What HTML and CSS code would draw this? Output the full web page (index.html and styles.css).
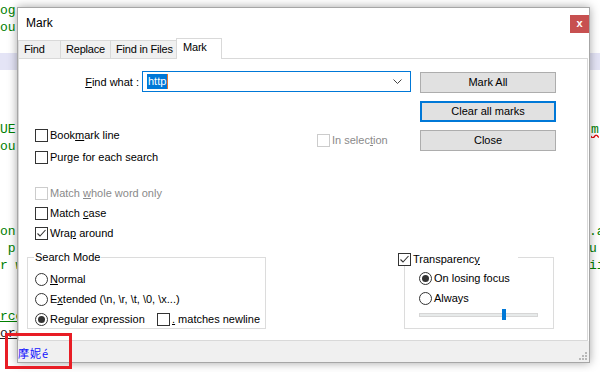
FILE: index.html
```html
<!DOCTYPE html>
<html>
<head>
    <meta charset="UTF-8">
    <title>Mark</title>
    <link rel="stylesheet" href="styles.css">
</head>
<body>
    <div class="screen">
        <!-- Редактор на заднем плане -->
        <div class="editor">
            <div class="line"><span>og:</span></div>
            <div class="line"><span>ou</span></div>
            <div class="line"></div>
            <div class="line current"></div>
            <div class="line"></div>
            <div class="line"></div>
            <div class="line"></div>
            <div class="line"><span>UE</span><span class="right"><span class="squiggle">m</span></span></div>
            <div class="line"><span>ou</span></div>
            <div class="line"></div>
            <div class="line"></div>
            <div class="line"></div>
            <div class="line"></div>
            <div class="line"><span>on</span><span class="right">.a</span></div>
            <div class="line"><span>&nbsp;p</span><span class="right">u</span></div>
            <div class="line"><span>r w</span><span class="right">ii</span></div>
            <div class="line"></div>
            <div class="line"></div>
            <div class="line"><span class="link">rce</span></div>
            <div class="line"><span class="link dark">ord</span></div>
            <div class="line"></div>
        </div>

        <!-- Окно Mark -->
        <div class="dialog">
            <div class="titlebar">
                <span class="title">Mark</span>
                <span class="close">x</span>
            </div>

            <div class="tabs">
                <div class="tab tab-find">Find</div>
                <div class="tab tab-replace">Replace</div>
                <div class="tab tab-files">Find in Files</div>
                <div class="tab tab-mark active">Mark</div>
            </div>

            <div class="panel">
                <div class="upper">
                    <div class="left">
                        <div class="find-row">
                            <span class="find-label"><u>F</u>ind what :</span>
                            <div class="combo">
                                <span class="selected">http</span><span class="caret"></span>
                                <svg class="chevron" width="9" height="5" viewBox="0 0 9 5"><path d="M0.5 0.5 L4.5 4.5 L8.5 0.5" fill="none" stroke="#444" stroke-width="1"/></svg>
                            </div>
                        </div>

                        <div class="opts">
                            <div class="opts-col">
                                <div class="check"><span class="box"></span><span>Book<u>m</u>ark line</span></div>
                                <div class="check"><span class="box"></span><span>Purge for each search</span></div>
                            </div>
                            <div class="check disabled in-selection"><span class="box"></span><span>In selec<u>t</u>ion</span></div>
                        </div>

                        <div class="opts2">
                            <div class="check disabled"><span class="box"></span><span>Match <u>w</u>hole word only</span></div>
                            <div class="check"><span class="box"></span><span>Match <u>c</u>ase</span></div>
                            <div class="check"><span class="box"><svg width="11" height="11" viewBox="0 0 11 11"><path d="M1.5 5.5 L4 8 L9.5 2" fill="none" stroke="#333" stroke-width="1.1"/></svg></span><span>Wra<u>p</u> around</span></div>
                        </div>
                    </div>

                    <div class="buttons">
                        <div class="btn">Mark All</div>
                        <div class="btn default">Clear all marks</div>
                        <div class="btn">Close</div>
                    </div>
                </div>

                <div class="lower">
                    <div class="group search-mode">
                        <span class="group-title">Search Mode</span>
                        <div class="check"><span class="radio"></span><span><u>N</u>ormal</span></div>
                        <div class="check"><span class="radio"></span><span>E<u>x</u>tended (\n, \r, \t, \0, \x...)</span></div>
                        <div class="check regex-row">
                            <span class="regex"><span class="radio on"></span><span>Regular expression</span></span>
                            <span class="box"></span><span><u>.</u> matches newline</span>
                        </div>
                    </div>

                    <div class="group transparency">
                        <div class="group-title check"><span class="box"><svg width="11" height="11" viewBox="0 0 11 11"><path d="M1.5 5.5 L4 8 L9.5 2" fill="none" stroke="#333" stroke-width="1.1"/></svg></span><span>Transparenc<u>y</u></span></div>
                        <div class="check"><span class="radio on"></span><span>On losing focus</span></div>
                        <div class="check"><span class="radio"></span><span>Always</span></div>
                        <div class="slider">
                            <div class="track"></div>
                            <div class="thumb"></div>
                        </div>
                    </div>
                </div>
            </div>

            <div class="status">
                <span class="status-text">摩妮é</span>
                <svg class="grip" width="8" height="8" viewBox="0 0 8 8">
                    <rect x="6" y="0" width="2" height="2" fill="#b8b8b8"/>
                    <rect x="3" y="3" width="2" height="2" fill="#b8b8b8"/>
                    <rect x="6" y="3" width="2" height="2" fill="#b8b8b8"/>
                    <rect x="0" y="6" width="2" height="2" fill="#b8b8b8"/>
                    <rect x="3" y="6" width="2" height="2" fill="#b8b8b8"/>
                    <rect x="6" y="6" width="2" height="2" fill="#b8b8b8"/>
                </svg>
            </div>
        </div>

        <!-- Красная рамка выделения -->
        <div class="marker"></div>
    </div>
</body>
</html>
```

FILE: styles.css
```css
body {
    margin: 0;
    font-family: "Liberation Sans", Arial, sans-serif;
    font-size: 11px;
    color: #000;
    background: #fff;
}

.screen {
    position: relative;
    width: 600px;
    height: 372px;
    overflow: hidden;
    background: #fff;
}

/* Редактор */
.editor {
    padding-top: 2px;
    font-family: "Liberation Mono", monospace;
    font-size: 13px;
    color: #008000;
}

.line {
    display: flex;
    justify-content: space-between;
    height: 17px;
    line-height: 17px;
    white-space: pre;
}

.line.current {
    background: #e4e4f6;
}

.line .right {
    width: 11px;
    overflow: hidden;
}

.squiggle {
    padding-left: 2px;
    text-decoration: underline wavy #e00000;
}

.link {
    text-decoration: underline;
}

.link.dark {
    color: #222;
}

/* Диалог */
.dialog {
    position: absolute;
    left: 17px;
    top: 7px;
    width: 573px;
    height: 356px;
    box-sizing: border-box;
    border: 1px solid #a6a6a6;
    background: #fff;
    box-shadow: 0 0 9px rgba(0,0,0,0.35);
    display: flex;
    flex-direction: column;
}

.titlebar {
    display: flex;
    align-items: center;
    height: 30px;
    padding-left: 8px;
    flex-shrink: 0;
}

.title {
    flex-grow: 1;
    font-size: 12px;
}

.close {
    align-self: flex-start;
    margin-top: 7px;
    width: 19px;
    height: 18px;
    line-height: 17px;
    text-align: center;
    background: #c75050;
    color: #fff;
    font-weight: bold;
    font-size: 11px;
}

.tabs {
    display: flex;
    align-items: flex-end;
    height: 20px;
    flex-shrink: 0;
    position: relative;
    z-index: 1;
}

.tab {
    box-sizing: border-box;
    height: 18px;
    line-height: 16px;
    padding-left: 5px;
    background: #f0f0f0;
    border: 1px solid #d9d9d9;
    border-bottom: none;
    margin-left: -1px;
    letter-spacing: -0.2px;
}

.tab-find {
    width: 43px;
    margin-left: 0;
}

.tab-replace {
    width: 51px;
}

.tab-files {
    width: 67px;
}

.tab-mark {
    width: 46px;
    padding-left: 6px;
}

.tab.active {
    height: 21px;
    margin-bottom: -1px;
    line-height: 17px;
    background: #fff;
}

.panel {
    box-sizing: border-box;
    width: 570px;
    height: 283px;
    border: 1px solid #d9d9d9;
    flex-shrink: 0;
}

.upper {
    display: flex;
}

.left {
    width: 392px;
}

.find-row {
    display: flex;
    align-items: center;
    margin-top: 12px;
    height: 21px;
}

.find-label {
    width: 120px;
    text-align: right;
    margin-right: 3px;
}

.combo {
    box-sizing: border-box;
    width: 269px;
    height: 21px;
    border: 1px solid #0078d7;
    display: flex;
    align-items: center;
    padding-left: 4px;
}

.selected {
    background: #0078d7;
    color: #fff;
    line-height: 15px;
    padding: 0 1px;
}

.caret {
    width: 1px;
    height: 15px;
    background: #e8742a;
}

.chevron {
    margin-left: auto;
    margin-right: 8px;
}

.check {
    display: flex;
    align-items: center;
    height: 20px;
    white-space: nowrap;
}

.box {
    box-sizing: border-box;
    width: 13px;
    height: 13px;
    border: 1px solid #333;
    background: #fff;
    margin-right: 2px;
    flex-shrink: 0;
}

.box svg {
    display: block;
}

.radio {
    box-sizing: border-box;
    width: 13px;
    height: 13px;
    border: 1px solid #333;
    border-radius: 50%;
    background: #fff;
    margin-right: 2px;
    flex-shrink: 0;
    display: flex;
    align-items: center;
    justify-content: center;
}

.radio.on::after {
    content: "";
    width: 7px;
    height: 7px;
    border-radius: 50%;
    background: #333;
}

.check.disabled {
    color: #8a8a8a;
}

.check.disabled .box {
    border-color: #cccccc;
}

.opts {
    display: flex;
    margin-top: 33px;
}

.opts-col {
    display: flex;
    flex-direction: column;
    gap: 2px;
    width: 282px;
    margin-left: 16px;
}

.in-selection {
    margin-top: 5px;
}

.opts2 {
    margin-top: 16px;
    margin-left: 16px;
}

.buttons {
    display: flex;
    flex-direction: column;
    gap: 8px;
    margin-left: 9px;
    margin-top: 13px;
    width: 136px;
}

.btn {
    box-sizing: border-box;
    height: 21px;
    line-height: 19px;
    text-align: center;
    background: #e1e1e1;
    border: 1px solid #adadad;
}

.btn.default {
    border: 2px solid #0078d7;
    line-height: 17px;
}

.lower {
    display: flex;
    margin-top: 14px;
    margin-left: 8px;
}

.group {
    position: relative;
    box-sizing: border-box;
    height: 72px;
    border: 1px solid #dcdcdc;
}

.group-title {
    position: absolute;
    top: -7px;
    left: 6px;
    padding: 0 1px;
    line-height: 13px;
    background: #fff;
}

.search-mode {
    width: 239px;
    padding-top: 11px;
    padding-left: 7px;
}

.regex {
    display: flex;
    align-items: center;
    width: 122px;
}

.transparency {
    width: 150px;
    margin-left: 138px;
    padding-top: 10px;
    padding-left: 14px;
}

.transparency .group-title {
    top: -5px;
    left: -7px;
    width: 120px;
    height: 13px;
    padding: 0;
}

.slider {
    position: relative;
    margin-top: 1px;
    height: 11px;
    width: 119px;
    display: flex;
    align-items: center;
}

.track {
    box-sizing: border-box;
    width: 119px;
    height: 4px;
    background: #e7eaea;
    border: 1px solid #d6d6d6;
}

.thumb {
    position: absolute;
    left: 83px;
    top: 0;
    width: 4px;
    height: 11px;
    background: #0078d7;
}

.status {
    display: flex;
    align-items: center;
    flex-grow: 1;
    background: #f0f0f0;
}

.status-text {
    flex-grow: 1;
    color: #1010ff;
    font-family: "Noto Sans CJK SC", sans-serif;
    font-size: 11px;
    letter-spacing: 1px;
    margin-top: 2px;
}

.grip {
    align-self: flex-end;
    margin: 0 2px 2px 0;
}

/* Красная рамка */
.marker {
    position: absolute;
    left: 5px;
    top: 333px;
    width: 67px;
    height: 36px;
    box-sizing: border-box;
    border: 3px solid #e81d25;
}
```
